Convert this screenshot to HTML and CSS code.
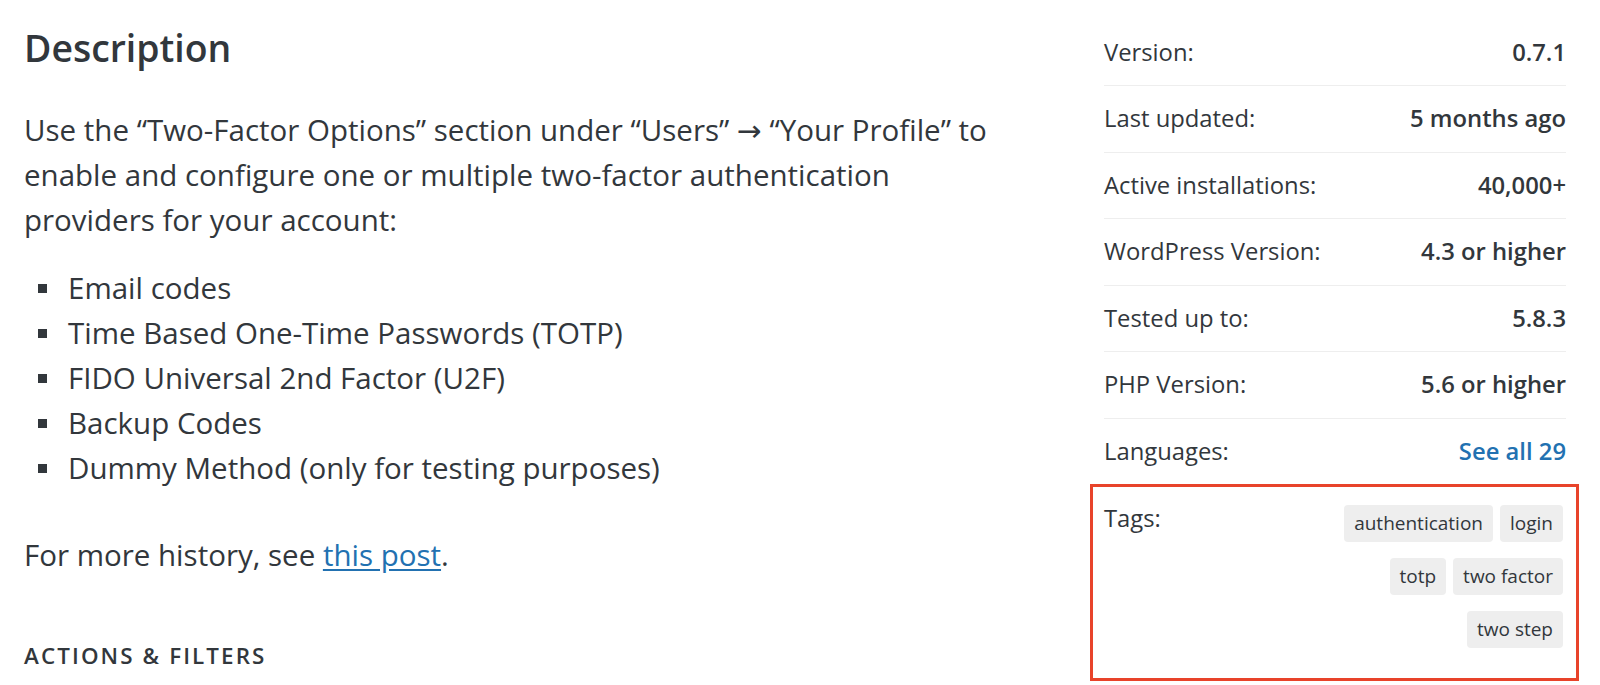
FILE: index.html
```html
<!DOCTYPE html>
<html lang="en">
<head>
<meta charset="utf-8">
<title>Two Factor – Description</title>
<link rel="stylesheet" href="styles.css">
</head>
<body>
<div class="page">
  <main class="main">
    <h2 class="title">Description</h2>
    <p class="para">Use the “Two-Factor Options” section under “Users” → “Your Profile” to enable and configure one or multiple two-factor authentication providers for your account:</p>
    <ul class="list">
      <li>Email codes</li>
      <li>Time Based One-Time Passwords (TOTP)</li>
      <li>FIDO Universal 2nd Factor (U2F)</li>
      <li>Backup Codes</li>
      <li>Dummy Method (only for testing purposes)</li>
    </ul>
    <p class="para">For more history, see <a class="link" href="#">this post</a>.</p>
    <h3 class="subtitle">Actions &amp; Filters</h3>
  </main>
  <aside class="meta">
    <ul class="meta-list">
      <li class="meta-row"><span class="meta-label">Version:</span><strong class="meta-value">0.7.1</strong></li>
      <li class="meta-row"><span class="meta-label">Last updated:</span><strong class="meta-value">5 months ago</strong></li>
      <li class="meta-row"><span class="meta-label">Active installations:</span><strong class="meta-value">40,000+</strong></li>
      <li class="meta-row"><span class="meta-label">WordPress Version:</span><strong class="meta-value">4.3 or higher</strong></li>
      <li class="meta-row"><span class="meta-label">Tested up to:</span><strong class="meta-value">5.8.3</strong></li>
      <li class="meta-row"><span class="meta-label">PHP Version:</span><strong class="meta-value">5.6 or higher</strong></li>
      <li class="meta-row"><span class="meta-label">Languages:</span><a class="meta-value meta-link" href="#">See all 29</a></li>
      <li class="meta-row tags-row">
        <span class="meta-label">Tags:</span>
        <div class="tags">
          <a class="tag" href="#">authentication</a>
          <a class="tag" href="#">login</a>
          <a class="tag" href="#">totp</a>
          <a class="tag" href="#">two factor</a>
          <a class="tag" href="#">two step</a>
        </div>
      </li>
    </ul>
  </aside>
</div>
</body>
</html>
```

FILE: styles.css
```css
* { box-sizing: border-box; }

html, body {
  margin: 0;
  padding: 0;
  background: #fff;
}

body {
  font-family: "Open Sans", "DejaVu Sans", sans-serif;
  color: #32373c;
  overflow: hidden;
}

.page {
  display: flex;
  justify-content: space-between;
  padding: 0 34px 0 24px;
  width: 1600px;
  height: 685px;
}

.main {
  width: 990px;
  padding-top: 23px;
}

.title {
  margin: 0;
  font-size: 37.4px;
  line-height: 50px;
  font-weight: 600;
  color: #32373c;
}

.para {
  margin: 35px 0 0;
  font-size: 29.5px;
  line-height: 44.8px;
}

.list {
  margin: 24px 0 0;
  padding: 0 0 0 14px;
  list-style: none;
  font-size: 29.5px;
  line-height: 44.8px;
}

.list li::before {
  content: "";
  display: inline-block;
  width: 9px;
  height: 9px;
  margin-right: 21px;
  background: #32373c;
  vertical-align: 6px;
}

.list + .para {
  margin-top: 43px;
}

.link {
  color: #2271b1;
  text-decoration: underline;
  text-underline-offset: 3px;
}

.subtitle {
  margin: 61px 0 0;
  font-size: 22.4px;
  line-height: 33.6px;
  font-weight: 600;
  text-transform: uppercase;
  letter-spacing: 2.1px;
}

.meta {
  width: 462px;
  padding-top: 19.5px;
}

.meta-list {
  list-style: none;
  margin: 0;
  padding: 0;
}

.meta-row {
  display: flex;
  justify-content: space-between;
  align-items: flex-start;
  padding: 16px 0;
  border-top: 1px solid #eee;
  font-size: 23.8px;
  line-height: 33.6px;
}

.meta-row:first-child {
  border-top: 0;
}

.meta-value {
  font-weight: 600;
  color: #32373c;
}

.meta-link {
  color: #2271b1;
  text-decoration: none;
}

.tags-row {
  border: 3px solid #e8432a;
  margin: -1px -13px 0 -14px;
  padding: 15px 13px 30px 11px;
}

.tags {
  display: flex;
  flex-wrap: wrap;
  justify-content: flex-end;
  gap: 16px 7px;
  width: 250px;
  padding-top: 3px;
}

.tag {
  display: inline-block;
  background: #eee;
  color: #32373c;
  border-radius: 4px;
  padding: 4px 10px;
  font-size: 19px;
  line-height: 29px;
  text-decoration: none;
}
```
